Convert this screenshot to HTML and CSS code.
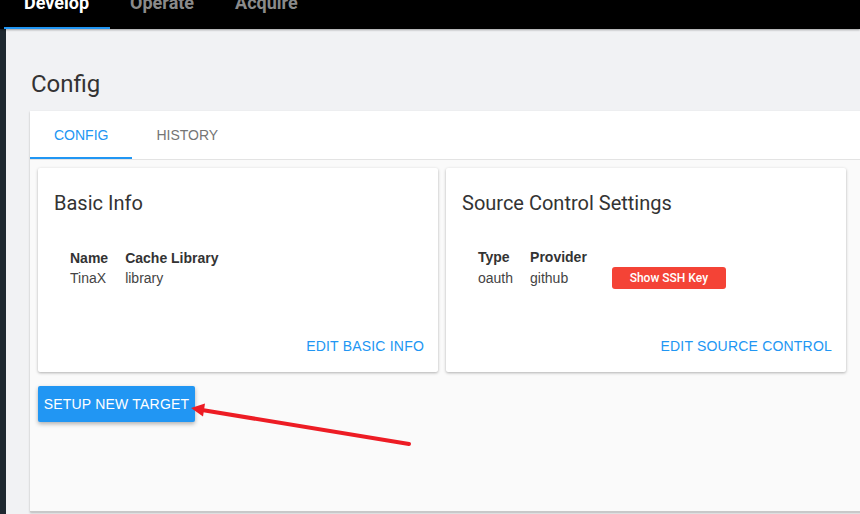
FILE: index.html
```html
<!DOCTYPE html>
<html>
<head>
<meta charset="utf-8">
<link rel="stylesheet" href="styles.css">
</head>
<body>
<header class="topbar">
  <nav class="nav">
    <a class="nav-item active"><span>Develop</span></a>
    <a class="nav-item"><span>Operate</span></a>
    <a class="nav-item"><span>Acquire</span></a>
  </nav>
</header>
<div class="shell">
  <div class="rail"></div>
  <main class="main">
    <h1 class="page-title">Config</h1>
    <section class="panel">
      <div class="tabs">
        <div class="tab active">CONFIG</div>
        <div class="tab">HISTORY</div>
      </div>
      <div class="panel-body">
        <div class="cards">
          <div class="card">
            <h2 class="card-title">Basic Info</h2>
            <div class="card-content">
              <table class="info">
                <tr><th>Name</th><th>Cache Library</th></tr>
                <tr><td>TinaX</td><td>library</td></tr>
              </table>
            </div>
            <div class="card-actions"><a class="link">EDIT BASIC INFO</a></div>
          </div>
          <div class="card">
            <h2 class="card-title">Source Control Settings</h2>
            <div class="card-content">
              <table class="info">
                <tr><th>Type</th><th>Provider</th><th></th></tr>
                <tr><td>oauth</td><td>github</td><td><button class="ssh-btn">Show SSH Key</button></td></tr>
              </table>
            </div>
            <div class="card-actions"><a class="link">EDIT SOURCE CONTROL</a></div>
          </div>
        </div>
        <button class="primary-btn">SETUP NEW TARGET</button>
      </div>
    </section>
  </main>
</div>
<svg class="annotation" width="860" height="514" viewBox="0 0 860 514">
  <line x1="409" y1="444" x2="202" y2="410" stroke="#ed1c24" stroke-width="4" stroke-linecap="round"/>
  <polygon points="191,408 205,403.5 203,416.5" fill="#ed1c24"/>
</svg>
</body>
</html>
```
FILE: styles.css
```css
* { box-sizing: border-box; }
html, body { margin: 0; padding: 0; }
body {
  width: 860px;
  height: 514px;
  overflow: hidden;
  background: #f1f2f4;
  font-family: "Liberation Sans", Arial, sans-serif;
  color: #333;
  position: relative;
}
.topbar {
  height: 29px;
  background: #000;
  box-shadow: 0 1px 2px rgba(0,0,0,0.35);
  position: relative;
  z-index: 2;
  overflow: hidden;
}
.nav {
  display: flex;
  padding-left: 4px;
  height: 29px;
}
.nav-item {
  display: block;
  padding: 0 21px 0 20px;
  height: 29px;
  font-family: Roboto, sans-serif;
  font-weight: 700;
  font-size: 18px;
  line-height: 20px;
  color: #8a8a8a;
  border-bottom: 2px solid transparent;
}
.nav-item span { display: block; margin-top: -7px; }
.nav-item.active { color: #fff; border-bottom-color: #2196f3; }
.shell {
  display: flex;
  height: 485px;
}
.rail {
  width: 6px;
  background: #1e2830;
  flex: none;
}
.main {
  flex: 1;
  padding-left: 24px;
}
.page-title {
  margin: 41px 0 13px 1px;
  font-family: Roboto, sans-serif;
  font-weight: 400;
  font-size: 24px;
  line-height: 28px;
  color: #333;
}
.panel {
  width: 900px;
  background: #fff;
  box-shadow: 0 1px 2px rgba(0,0,0,0.25);
}
.tabs {
  display: flex;
  height: 49px;
  border-bottom: 1px solid #e3e3e3;
}
.tab {
  padding: 0 24px;
  height: 48px;
  line-height: 48px;
  font-size: 14px;
  color: #757575;
  border-bottom: 2px solid transparent;
}
.tab.active {
  color: #2196f3;
  border-bottom-color: #2196f3;
}
.panel-body {
  background: #fafafa;
  padding: 8px;
  height: 352px;
  border-bottom: 1px solid #c8c8c8;
}
.cards {
  display: flex;
  gap: 8px;
}
.card {
  width: 400px;
  height: 204px;
  background: #fff;
  border-radius: 2px;
  box-shadow: 0 1px 3px rgba(0,0,0,0.3);
  display: flex;
  flex-direction: column;
  padding: 23px 14px 8px 16px;
}
.card-title {
  margin: 0;
  font-family: Roboto, sans-serif;
  font-weight: 400;
  font-size: 20px;
  line-height: 24px;
  color: #333;
}
.card-content {
  flex: 1;
  display: flex;
  align-items: center;
  padding-bottom: 8px;
}
.info {
  border-collapse: collapse;
  margin-left: 16px;
  font-size: 14px;
}
.info th {
  text-align: left;
  font-weight: 700;
  color: #333;
  padding: 0 17px 0 0;
  height: 20px;
  line-height: 20px;
}
.info td {
  color: #444;
  padding: 0 17px 0 0;
  line-height: 20px;
  height: 20px;
  vertical-align: middle;
}
.ssh-btn {
  margin-left: 8px;
  width: 114px;
  height: 22px;
  border: none;
  border-radius: 3px;
  background: #f44336;
  color: #fff;
  font-family: Roboto, sans-serif;
  font-weight: 500;
  font-size: 12px;
  padding: 0;
}
.card-actions {
  height: 36px;
  display: flex;
  align-items: center;
  justify-content: flex-end;
}
.link {
  color: #2196f3;
  font-size: 14px;
  letter-spacing: 0.2px;
}
.primary-btn {
  margin-top: 14px;
  height: 36px;
  width: 157px;
  padding: 0;
  border: none;
  border-radius: 2px;
  background: #2196f3;
  color: #fff;
  font-family: "Liberation Sans", Arial, sans-serif;
  font-size: 14px;
  letter-spacing: 0.2px;
  box-shadow: 0 2px 4px rgba(0,0,0,0.3);
}
.annotation {
  position: absolute;
  left: 0;
  top: 0;
  pointer-events: none;
  z-index: 5;
}
```
